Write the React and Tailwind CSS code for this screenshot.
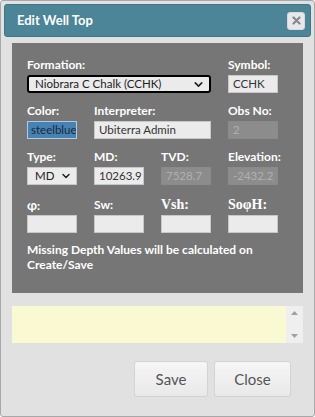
import { ChevronDown } from 'lucide-react'

const font = { fontFamily: 'Lato, "Open Sans", "Liberation Sans", sans-serif' }

function Label({ children, serif }) {
  return (
    <div
      className={`h-4 leading-4 font-bold text-white ${serif ? "font-['Liberation_Serif',serif] text-[14px]" : 'text-[12px]'}`}
    >
      {children}
    </div>
  )
}

function Field({ value, disabled, className = '' }) {
  return (
    <div
      className={`mt-0.5 h-[18px] border px-[4px] text-[11.5px] leading-4 overflow-hidden whitespace-nowrap ${
        disabled ? 'bg-[#8c8c8c] border-[#8a8a8a] text-[#b0b0b0]' : 'bg-[#ebebeb] border-[#c8c8c8] text-[#333]'
      } ${className}`}
    >
      {value}
    </div>
  )
}

export default function App() {
  return (
    <div className="w-[315px] h-[417px] bg-white" style={font}>
      <div className="w-[315px] h-[417px] bg-[#e1e1e1] border border-[#a8a8a8] rounded-[3px] p-[3px] flex flex-col">
        <div className="h-[33px] bg-[#4b8597] border border-[#3f7687] rounded-[3px] flex items-center justify-between pl-[12px] pr-[5px]">
          <span className="text-white font-bold text-[13px]">Edit Well Top</span>
          <div className="w-[18px] h-[18px] bg-[#e8e8e8] border border-[#d8d8d8] rounded-[3px] flex items-center justify-center">
            <svg width="9" height="9" viewBox="0 0 9 9">
              <path d="M1.5 1.5L7.5 7.5M7.5 1.5L1.5 7.5" stroke="#888" strokeWidth="2.2" strokeLinecap="round" />
            </svg>
          </div>
        </div>

        <div className="mx-[8px] mt-[6px] h-[250px] bg-[#767676] pl-[15px] pr-[23px] pt-[14px]">
          <div className="grid grid-cols-[50px_50px_50px_50px] gap-x-[17px] gap-y-[10px]">
            <div className="col-span-3">
              <Label>Formation:</Label>
              <div className="mt-0.5 h-[18px] bg-[#ebebeb] border-2 border-black rounded-[3px] flex items-center justify-between pl-[6px] pr-[4px] text-[11.5px] text-[#222]">
                <span>Niobrara C Chalk (CCHK)</span>
                <ChevronDown size={13} strokeWidth={3} />
              </div>
            </div>
            <div>
              <Label>Symbol:</Label>
              <Field value="CCHK" />
            </div>

            <div>
              <Label>Color:</Label>
              <Field value="steelblue" className="!bg-[#4682b4] !border-[#b8c8d8] !text-[#1a2a3a] !px-[3px]" />
            </div>
            <div className="col-span-2">
              <Label>Interpreter:</Label>
              <Field value="Ubiterra Admin" />
            </div>
            <div>
              <Label>Obs No:</Label>
              <Field value="2" disabled />
            </div>

            <div>
              <Label>Type:</Label>
              <div className="mt-0.5 h-[18px] bg-[#ebebeb] border border-[#c8c8c8] flex items-center justify-between pl-[7px] pr-[4px] text-[11.5px] text-[#222]">
                <span>MD</span>
                <ChevronDown size={12} strokeWidth={3} />
              </div>
            </div>
            <div>
              <Label>MD:</Label>
              <Field value="10263.9" />
            </div>
            <div>
              <Label>TVD:</Label>
              <Field value="7528.7" disabled />
            </div>
            <div>
              <Label>Elevation:</Label>
              <Field value="-2432.2" disabled />
            </div>

            <div className="mt-[2px]">
              <Label>
                <span className="text-[13px]">φ</span>:
              </Label>
              <Field value="" />
            </div>
            <div className="mt-[2px]">
              <Label>Sw:</Label>
              <Field value="" />
            </div>
            <div className="mt-[2px]">
              <Label serif>Vsh:</Label>
              <Field value="" />
            </div>
            <div className="mt-[2px]">
              <Label serif>SoφH:</Label>
              <Field value="" />
            </div>
          </div>
          <p className="mt-[9px] text-[12px] leading-[15px] font-bold text-white whitespace-nowrap">
            Missing Depth Values will be calculated on
            <br />
            Create/Save
          </p>
        </div>

        <div className="mx-[8px] mt-[13px] h-[37px] flex">
          <div className="flex-1 bg-[#fafad2]" />
          <div className="w-[17px] bg-[#efefef] flex flex-col items-center justify-between py-[5px]">
            <svg width="7" height="4" viewBox="0 0 7 4"><path d="M0 4L3.5 0L7 4Z" fill="#a0a0a0" /></svg>
            <svg width="7" height="4" viewBox="0 0 7 4"><path d="M0 0L3.5 4L7 0Z" fill="#a0a0a0" /></svg>
          </div>
        </div>

        <div className="flex justify-end gap-[6px] mt-[18px] pr-[20px]">
          <button className="w-[74px] h-[36px] rounded-[3px] border border-[#d3d3d3] bg-gradient-to-b from-[#f6f6f6] to-[#e9e9e9] text-[15px] text-[#555]">
            Save
          </button>
          <button className="w-[77px] h-[36px] rounded-[3px] border border-[#d3d3d3] bg-gradient-to-b from-[#f6f6f6] to-[#e9e9e9] text-[15px] text-[#555]">
            Close
          </button>
        </div>
      </div>
    </div>
  )
}
